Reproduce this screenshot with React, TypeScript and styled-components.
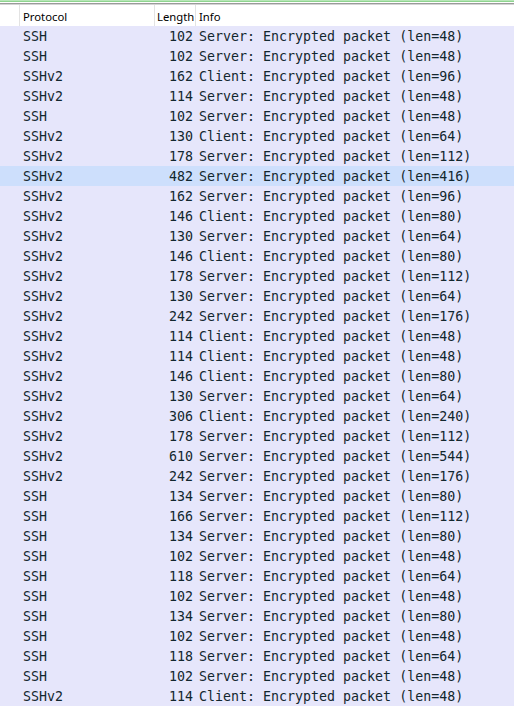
import React from "react";
import styled, { createGlobalStyle } from "styled-components";

const Global = createGlobalStyle`
  html, body { margin: 0; padding: 0; background: #ffffff; }
  body { width: 514px; height: 707px; overflow: hidden; }
`;

type Row = [string, number, string, string];

const rows: Row[] = [
  ["SSH", 102, "Server", "48"],
  ["SSH", 102, "Server", "48"],
  ["SSHv2", 162, "Client", "96"],
  ["SSHv2", 114, "Server", "48"],
  ["SSH", 102, "Server", "48"],
  ["SSHv2", 130, "Client", "64"],
  ["SSHv2", 178, "Server", "112"],
  ["SSHv2", 482, "Server", "416"],
  ["SSHv2", 162, "Server", "96"],
  ["SSHv2", 146, "Client", "80"],
  ["SSHv2", 130, "Server", "64"],
  ["SSHv2", 146, "Client", "80"],
  ["SSHv2", 178, "Server", "112"],
  ["SSHv2", 130, "Server", "64"],
  ["SSHv2", 242, "Server", "176"],
  ["SSHv2", 114, "Client", "48"],
  ["SSHv2", 114, "Client", "48"],
  ["SSHv2", 146, "Client", "80"],
  ["SSHv2", 130, "Server", "64"],
  ["SSHv2", 306, "Client", "240"],
  ["SSHv2", 178, "Server", "112"],
  ["SSHv2", 610, "Server", "544"],
  ["SSHv2", 242, "Server", "176"],
  ["SSH", 134, "Server", "80"],
  ["SSH", 166, "Server", "112"],
  ["SSH", 134, "Server", "80"],
  ["SSH", 102, "Server", "48"],
  ["SSH", 118, "Server", "64"],
  ["SSH", 102, "Server", "48"],
  ["SSH", 134, "Server", "80"],
  ["SSH", 102, "Server", "48"],
  ["SSH", 118, "Server", "64"],
  ["SSH", 102, "Server", "48"],
  ["SSHv2", 114, "Client", "48"],
];

const Frame = styled.div`
  width: 514px;
  height: 707px;
  display: flex;
  flex-direction: column;
  overflow: hidden;
  background: #ffffff;
`;

const TopEdge = styled.div`
  height: 3px;
  flex: none;
  background: linear-gradient(#b8e6b8 0 1px, #8fd48f 1px 2px, #ffffff 2px 3px);
`;

const Divider = styled.div`
  height: 2px;
  flex: none;
  background: linear-gradient(#9a9a9a 0 1px, #d4d4d4 1px 2px);
`;

const Header = styled.div`
  display: grid;
  grid-template-columns: 19px 135px 41px 1fr;
  height: 21px;
  flex: none;
  background: #ffffff;
`;

const HeadCell = styled.div<{ $first?: boolean; $pad?: number }>`
  display: flex;
  align-items: center;
  padding: 2px 0 0 ${(p) => p.$pad ?? 3}px;
  border-left: ${(p) => (p.$first ? "0" : "1px solid #e3e3e3")};
  font-family: "Noto Sans", "Open Sans", sans-serif;
  font-size: 11.3px;
  color: #000000;
  white-space: nowrap;
  overflow: hidden;
  box-sizing: border-box;
`;

const Body = styled.div`
  display: flex;
  flex-direction: column;
`;

const PacketRow = styled.div<{ $selected?: boolean }>`
  display: grid;
  grid-template-columns: 19px 135px 41px 1fr;
  height: 20px;
  align-items: center;
  background: ${(p) => (p.$selected ? "#cddffc" : "#e6e6fb")};
  font-family: "DejaVu Sans Mono", "Liberation Mono", monospace;
  font-size: 13.3px;
  color: #12272e;
  white-space: nowrap;
`;

const Cell = styled.div<{ $align?: "left" | "right" }>`
  text-align: ${(p) => p.$align ?? "left"};
  padding: 0 ${(p) => (p.$align === "right" ? "2px" : "0")} 0 ${(p) => (p.$align === "right" ? "0" : "4px")};
`;

export default function App() {
  return (
    <>
      <Global />
      <Frame>
        <TopEdge />
        <Divider />
        <Header>
          <HeadCell $first />
          <HeadCell>Protocol</HeadCell>
          <HeadCell $pad={2}>Length</HeadCell>
          <HeadCell>Info</HeadCell>
        </Header>
        <Body>
          {rows.map(([proto, len, side, plen], i) => (
            <PacketRow key={i} $selected={i === 7}>
              <Cell />
              <Cell>{proto}</Cell>
              <Cell $align="right">{len}</Cell>
              <Cell>{`${side}: Encrypted packet (len=${plen})`}</Cell>
            </PacketRow>
          ))}
        </Body>
      </Frame>
    </>
  );
}
